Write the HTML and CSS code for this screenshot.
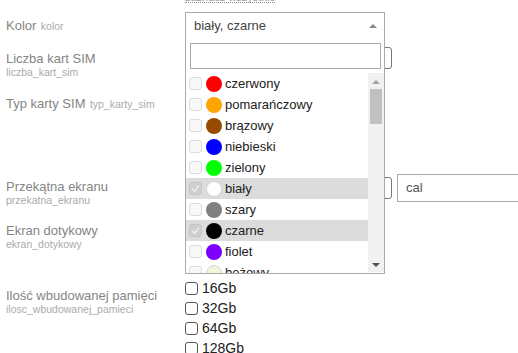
FILE: index.html
```html
<!DOCTYPE html>
<html lang="pl">
<head>
<meta charset="utf-8">
<title>Formularz</title>
<link rel="stylesheet" href="styles.css">
</head>
<body>
<div class="page">
  <div class="toplink"><span class="dotted">zaznacz wszystkie</span></div>

  <div class="row row-a">
    <div class="label"><span class="name">Kolor</span> <span class="key">kolor</span></div>
    <div class="field"></div>
  </div>

  <div class="row row-b">
    <div class="label"><div class="name">Liczba kart SIM</div><div class="key">liczba_kart_sim</div></div>
    <div class="field"><div class="num-input"></div></div>
  </div>

  <div class="row row-c">
    <div class="label"><span class="name">Typ karty SIM</span> <span class="key">typ_karty_sim</span></div>
    <div class="field"></div>
  </div>

  <div class="row row-d">
    <div class="label"><div class="name">Przekątna ekranu</div><div class="key">przekatna_ekranu</div></div>
    <div class="field field-inline"><div class="num-input"></div><div class="unit-input">cal</div></div>
  </div>

  <div class="row row-e">
    <div class="label"><div class="name">Ekran dotykowy</div><div class="key">ekran_dotykowy</div></div>
    <div class="field"></div>
  </div>

  <div class="row row-f">
    <div class="label label-f"><div class="name">Ilość wbudowanej pamięci</div><div class="key">ilosc_wbudowanej_pamieci</div></div>
    <div class="field checks">
      <label class="check"><span class="box"></span>16Gb</label>
      <label class="check"><span class="box"></span>32Gb</label>
      <label class="check"><span class="box"></span>64Gb</label>
      <label class="check"><span class="box"></span>128Gb</label>
    </div>
  </div>

  <div class="dropdown">
    <div class="dd-head"><span class="dd-value">biały, czarne</span><span class="dd-caret"></span></div>
    <div class="dd-search"></div>
    <div class="dd-body">
      <div class="dd-list">
        <div class="opt"><span class="cb"></span><span class="dot" style="background:#ff0000"></span>czerwony</div>
        <div class="opt"><span class="cb"></span><span class="dot" style="background:#ffa500"></span>pomarańczowy</div>
        <div class="opt"><span class="cb"></span><span class="dot" style="background:#964b00"></span>brązowy</div>
        <div class="opt"><span class="cb"></span><span class="dot" style="background:#0000ff"></span>niebieski</div>
        <div class="opt"><span class="cb"></span><span class="dot" style="background:#00ff00"></span>zielony</div>
        <div class="opt sel"><span class="cb on"><svg viewBox="0 0 13 13" width="13" height="13"><path d="M3 6.8 L5.4 9.2 L10 3.8" fill="none" stroke="#ececec" stroke-width="1.6"/></svg></span><span class="dot light" style="background:#ffffff"></span>biały</div>
        <div class="opt"><span class="cb"></span><span class="dot" style="background:#808080"></span>szary</div>
        <div class="opt sel"><span class="cb on"><svg viewBox="0 0 13 13" width="13" height="13"><path d="M3 6.8 L5.4 9.2 L10 3.8" fill="none" stroke="#ececec" stroke-width="1.6"/></svg></span><span class="dot" style="background:#000000"></span>czarne</div>
        <div class="opt"><span class="cb"></span><span class="dot" style="background:#8000ff"></span>fiolet</div>
        <div class="opt"><span class="cb"></span><span class="dot light" style="background:#f5f5dc"></span>beżowy</div>
      </div>
      <div class="scrollbar">
        <div class="sb-btn"><span class="tri-up"></span></div>
        <div class="sb-track"><div class="sb-thumb"></div></div>
        <div class="sb-btn"><span class="tri-down"></span></div>
      </div>
    </div>
  </div>
</div>
</body>
</html>
```

FILE: styles.css
```css
html, body {
  margin: 0;
  padding: 0;
  background: #ffffff;
  overflow: hidden;
}
body {
  font-family: "Liberation Sans", Arial, sans-serif;
  width: 518px;
  height: 353px;
}
.page {
  position: relative;
  display: flow-root;
  width: 518px;
  height: 353px;
}
.toplink {
  height: 12px;
  margin-top: -8px;
  padding-left: 185px;
  font-size: 11px;
  line-height: 10px;
}
.dotted {
  display: inline-block;
  vertical-align: top;
  font-size: 11px;
  line-height: 10px;
  color: #9a9a9a;
  border-bottom: 1px dotted #8a8a8a;
}
.row {
  display: flex;
  margin-bottom: 8px;
}
.row-a { margin-top: 8px; height: 27px; }
.row-b { height: 35px; }
.row-c { height: 76px; }
.row-d { height: 36px; }
.row-e { height: 52px; }
.row-f { margin-bottom: 0; }

.label {
  box-sizing: border-box;
  width: 185px;
  flex: none;
  padding-left: 6px;
  padding-top: 4px;
}
.row-d .label, .row-e .label { padding-top: 4.5px; }
.label-f { padding-top: 9.5px; }
.name {
  font-size: 13px;
  line-height: 16px;
  color: #858585;
}
.key {
  font-size: 10.5px;
  line-height: 11px;
  color: #ababab;
}
.field { flex: 1; min-width: 0; }
.field-inline {
  display: flex;
  align-items: flex-start;
  gap: 5px;
}
.num-input {
  box-sizing: border-box;
  width: 207px;
  height: 22px;
  border: 1px solid #777777;
  border-radius: 3px;
  background: #fff;
  flex: none;
}
.row-d .num-input { margin-top: 3px; }
.unit-input {
  box-sizing: border-box;
  width: 150px;
  height: 28px;
  flex: none;
  border: 1px solid #aaaaaa;
  padding-left: 8px;
  font-size: 13px;
  line-height: 26px;
  color: #555555;
}
.checks { display: flex; flex-direction: column; }
.check {
  display: flex;
  align-items: flex-start;
  gap: 4px;
  height: 20px;
  font-size: 14px;
  line-height: 20px;
  color: #222222;
}
.check .box {
  box-sizing: border-box;
  width: 13px;
  height: 13px;
  margin-top: 4px;
  border: 1px solid #555555;
  border-radius: 3px;
  background: #fff;
  flex: none;
}

/* dropdown overlay */
.dropdown {
  position: absolute;
  left: 185px;
  top: 12px;
  box-sizing: border-box;
  width: 200px;
  border: 1px solid #aaaaaa;
  background: #ffffff;
}
.dd-head {
  display: flex;
  align-items: center;
  justify-content: space-between;
  height: 26px;
  padding: 0 7px 0 8px;
  font-size: 13px;
  line-height: 24px;
  color: #444444;
}
.dd-value { padding-bottom: 1px; }
.dd-caret {
  width: 0;
  height: 0;
  border-left: 4px solid transparent;
  border-right: 4px solid transparent;
  border-bottom: 4px solid #888888;
  margin-top: -1px;
}
.dd-search {
  box-sizing: border-box;
  height: 26px;
  margin: 4px 3px 4px 4px;
  border: 1px solid #aaaaaa;
  background: #fff;
}
.dd-body {
  display: flex;
  height: 200px;
  overflow: hidden;
}
.dd-list { flex: 1; min-width: 0; }
.opt {
  display: flex;
  align-items: center;
  height: 21px;
  padding-left: 3px;
  font-size: 13px;
  color: #222222;
  white-space: nowrap;
}
.opt.sel { background: #dcdcdc; }
.cb {
  box-sizing: border-box;
  width: 13px;
  height: 13px;
  border: 1px solid #dcdcdc;
  border-radius: 3px;
  background: #f8f8f8;
  margin-right: 4px;
  flex: none;
  display: flex;
}
.cb svg { margin: -1px; }
.cb.on {
  background: #cfcfcf;
  border-color: #c6c6c6;
}
.dot {
  width: 16px;
  height: 16px;
  border-radius: 50%;
  margin-right: 3px;
  flex: none;
  box-sizing: border-box;
}
.dot.light { border: 1px solid #d6d6d6; }

.scrollbar {
  width: 16px;
  flex: none;
  display: flex;
  flex-direction: column;
  background: #f1f1f1;
  height: 199px;
}
.sb-btn {
  height: 16px;
  display: flex;
  align-items: center;
  justify-content: center;
  flex: none;
}
.tri-up {
  width: 0; height: 0;
  border-left: 4px solid transparent;
  border-right: 4px solid transparent;
  border-bottom: 4px solid #a3a3a3;
  margin-top: 2px;
}
.tri-down {
  width: 0; height: 0;
  border-left: 4px solid transparent;
  border-right: 4px solid transparent;
  border-top: 4px solid #505050;
  margin-top: 1px;
}
.sb-track { flex: 1; padding: 0 2px; }
.sb-thumb {
  height: 35px;
  background: #c1c1c1;
}
```
